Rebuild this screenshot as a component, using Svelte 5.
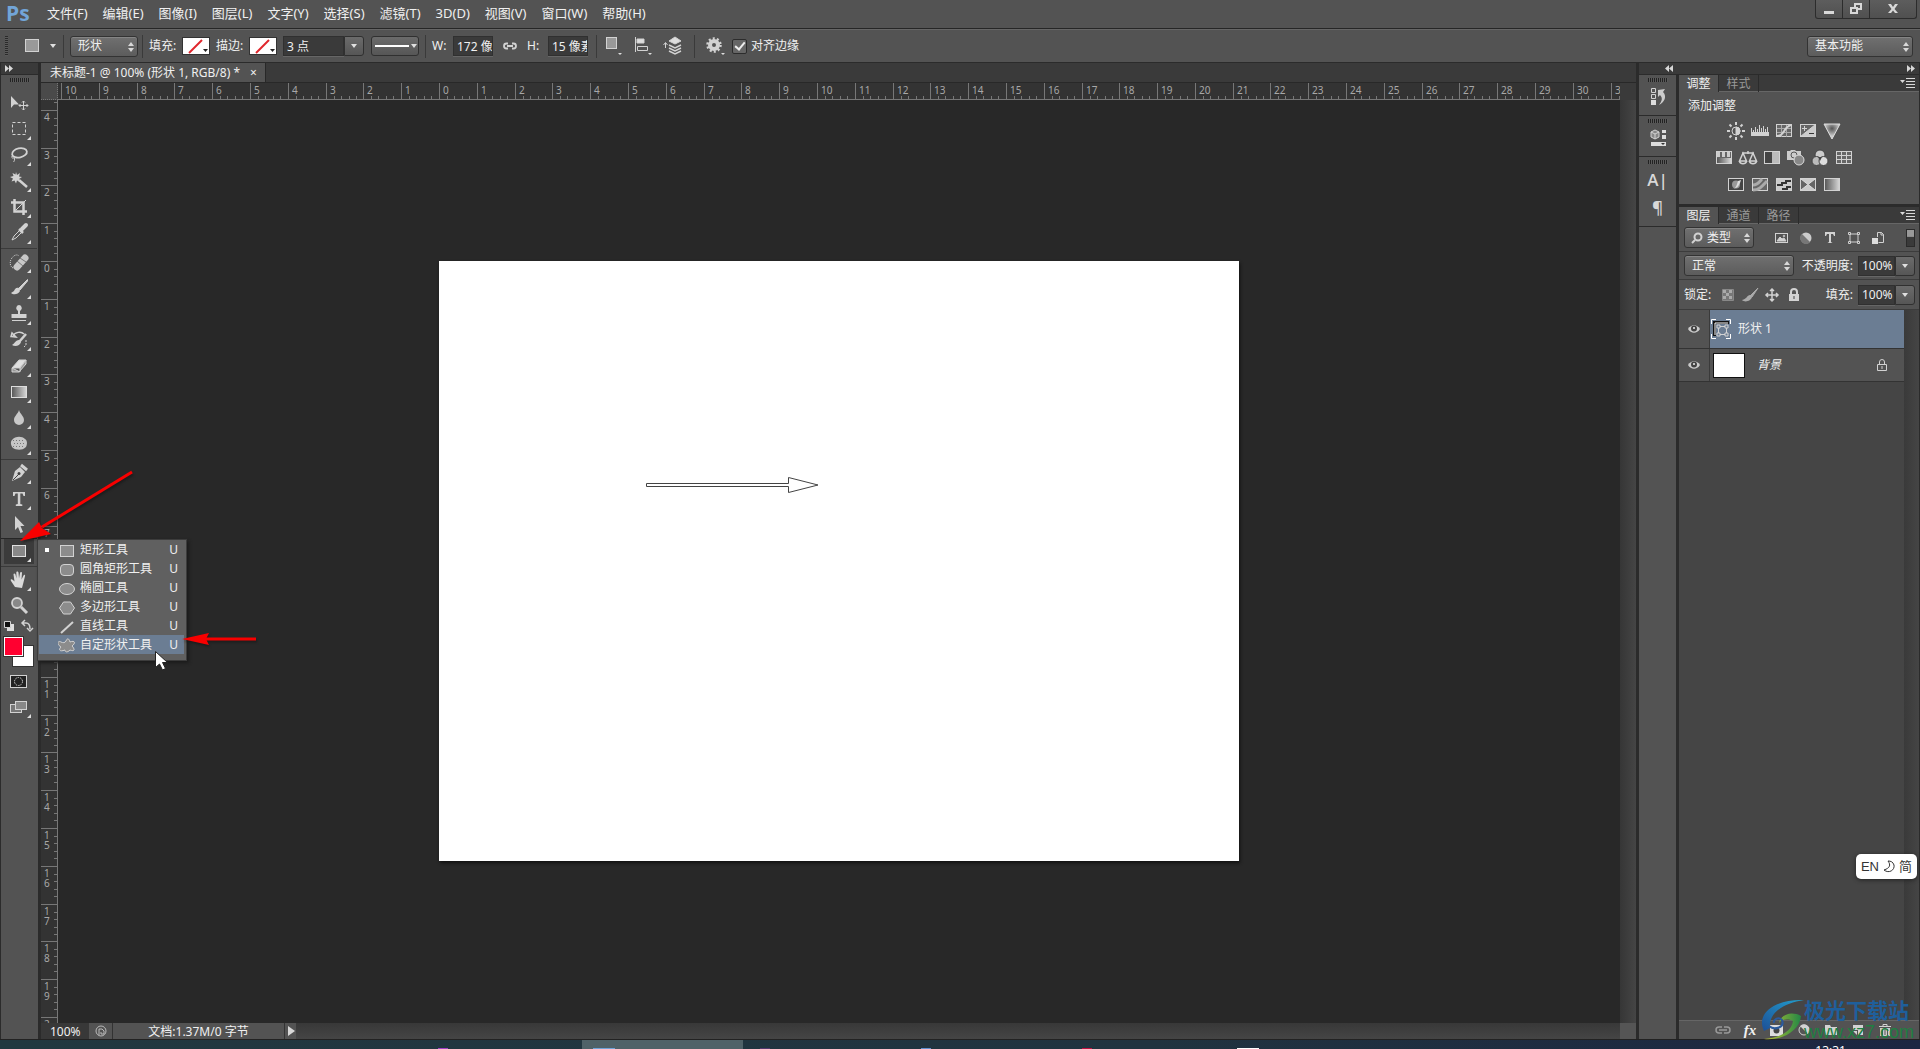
<script lang="ts">
	const menus = ["文件(F)", "编辑(E)", "图像(I)", "图层(L)", "文字(Y)", "选择(S)", "滤镜(T)", "3D(D)", "视图(V)", "窗口(W)", "帮助(H)"];

	// drawn on a 36 x 26 box, centred on 18,13
	const tools = [
		{ name: "移动工具", plain: true, art: `<path d="M10 6v12l3-3.500h5z" fill="#d2d2d2" stroke="none"/><path d="M18 15.500h9M22.500 11v9M21 12.500l1.500-1.500 1.500 1.500M21 18.500l1.500 1.500 1.500-1.500M19.500 14l-1.500 1.500 1.500 1.500M25.500 14l1.500 1.500-1.500 1.500"/>` },
		{ name: "矩形选框工具", art: `<rect x="11.500" y="6.500" width="13" height="12" stroke-dasharray="3 2"/>` },
		{ name: "套索工具", art: `<ellipse cx="18.500" cy="11" rx="7.500" ry="4.500" transform="rotate(-12 18 11)" stroke-width="1.800"/><path d="M12 13.500c-2 1-1.500 3 .5 2.500s1 3 0 4" />` },
		{ name: "魔棒工具", art: `<path d="M15 4l1 3 3-2-1 3.500 3 .5-3 2 1 3-3-1.500-1 3-1.500-3-3 1 1.500-3-3-1.500 3.500-1-1-3 3 1.500z" fill="#d2d2d2" stroke="none"/><path d="M18 12l8 7" stroke-width="2.500"/>` },
		{ name: "裁剪工具", art: `<path d="M13.500 5v12.500H26M10 8.500h12.500V21" stroke-width="2.500"/><path d="M15 16L25 6"/>` },
		{ name: "吸管工具", art: `<path d="M11 20l2-4 6-6 2 2-6 6z" fill="#555"/><path d="M18 9l4 4" stroke-width="2.500"/><path d="M21 9l4-4" stroke-width="4" stroke-linecap="round"/>`, last: true },
		{ name: "污点修复画笔工具", art: `<path d="M16 18l8-9" stroke-width="7" stroke-linecap="round" stroke="#c8c8c8"/><path d="M16 12l6 5M19 9l6 4" stroke="#777"/><path d="M12 19c-4-2-3-8-1-10 2-3 5-4 7-2" stroke-dasharray="1 1"/>` },
		{ name: "画笔工具", art: `<path d="M26.500 4.500l-9 9 1.500 1.500 7.500-9z" fill="#d2d2d2"/><path d="M18 13c-3-1-4 1-5 3l-3 2c2 2 7 2 9-2z" fill="#d2d2d2" stroke="none"/>` },
		{ name: "仿制图章工具", art: `<path d="M18 4a3 3 0 0 0-2 5l1 1v3h-6.500v4h15v-4H19v-3l1-1a3 3 0 0 0-2-5z" fill="#d2d2d2" stroke="none"/><path d="M11 19.500h14"/>` },
		{ name: "历史记录画笔工具", art: `<path d="M12 9c2-4 8-5 11-2M10 9.500l5 .5-4-4z" stroke-width="1.500"/><path d="M25 7l-7 8" stroke-width="2.500"/><path d="M18 13c-3 0-4 3-7 5 3 2 8 1 9-3z" fill="#d2d2d2" stroke="none"/><path d="M25 13v5l-2 2" stroke-dasharray="2 1"/>` },
		{ name: "橡皮擦工具", art: `<path d="M11 15l7-8h7l-6 8z" fill="#e0e0e0"/><path d="M11 15v4h7l7-8V7l-6 8v4z" fill="#999"/>` },
		{ name: "渐变工具", art: `<rect x="10.500" y="7.500" width="15" height="11" fill="url(#fade)" stroke="#ddd"/>` },
		{ name: "模糊工具", art: `<path d="M18 5c1 4 5 6 5 10a5 5 0 0 1-10 0c0-4 4-6 5-10z" fill="#c8c8c8" stroke="none"/>` },
		{ name: "海绵工具", art: `<path d="M11 9c3-4 10-4 13-1 3 2 2 6 1 8-4 4-10 3-13 1-2-2-3-6-1-8z" fill="#c6c6c6" stroke="none"/><path d="M12 9.500h12M13 12.500h12M12 15.500h12" stroke="#777" stroke-dasharray="1 2"/>`, last: true },
		{ name: "钢笔工具", art: `<path d="M19 7l5 5-4 5-9 4 3-10z" fill="#d2d2d2" stroke="none"/><path d="M20 5l6 5" stroke-width="3"/><path d="M12 20l6-6" stroke="#444"/><circle cx="18" cy="13.500" r="1.500" fill="#444" stroke="none"/>` },
		{ name: "横排文字工具", art: `<path d="M12 6h12v4h-1.500l-1-2.500h-2.200V18l2 .5V20h-6.500v-1.500l2-.5V7.500h-2.300l-1 2.500H12z" fill="#d2d2d2" stroke="none"/>` },
		{ name: "路径选择工具", plain: true, art: `<path d="M14 4v14l3-3 2.500 6 2.500-1-2.500-6h4z" fill="#d2d2d2" stroke="none"/>` },
		{ name: "矩形工具", art: `<rect x="11.500" y="7.500" width="13" height="11" fill="#888" stroke="#e0e0e0"/>`, active: true, last: true },
		{ name: "抓手工具", art: `<path d="M14 20l-4-6c-1-2 .5-2.500 2-1l1.500 1.500-1-7c0-1.500 1.500-1.500 2 0l1 4-.2-6c0-1.500 2-1.500 2.200 0l.5 6 1-5.500c.3-1.500 2-1.200 2 0l-.5 6.500 2-4c.8-1.300 2-.5 1.500.7l-2 8-1 3.800z" fill="#dadada" stroke="none"/>` },
		{ name: "缩放工具", plain: true, art: `<circle cx="16" cy="10" r="5" fill="#888" stroke-width="1.800"/><path d="M20 14l6 6" stroke-width="3"/>` },
	];

	const shapeTools = [
		{ name: "矩形工具", art: `<rect x="2.500" y="4.500" width="13" height="11"/>`, on: true },
		{ name: "圆角矩形工具", art: `<rect x="2.500" y="4.500" width="13" height="11" rx="3.500"/>` },
		{ name: "椭圆工具", art: `<ellipse cx="9" cy="10" rx="7.500" ry="5.500"/>` },
		{ name: "多边形工具", art: `<path d="M1.500 10l4-6h7l4 6-4 6h-7z"/>` },
		{ name: "直线工具", art: `<path d="M3 16L15 5" stroke-width="2"/>` },
		{ name: "自定形状工具", art: `<path d="M8 5c1-3 3-3 4 1 5-2 6 1 2 4 3 3 3 6-2 4-3 3-5 2-5 0-5 2-7 0-4-3-5-3-3-7 0-5 2 1 4 1 5-1z"/>`, hover: true },
	];

	const box = `<rect x="2.500" y="3.500" width="15" height="12" fill="#666"/>`;
	const adjustments = [
		[
			`<circle cx="10" cy="10" r="4"/><path d="M10 6a4 4 0 0 1 0 8z" fill="#d2d2d2"/><path d="M10 1v3M10 16v3M1 10h3M16 10h3M3.500 3.500l2 2M14.500 14.500l2 2M3.500 16.500l2-2M14.500 5.500l2-2" stroke-width="2"/>`,
			`<path d="M1 15v-4h18v4z" fill="#d2d2d2" stroke="none"/><path d="M1.500 7v5M3.500 9v3M5.500 6v6M7.500 8v4M9.500 4v8M11.500 7v5M13.500 5v7M15.500 8v4M17.500 6v6"/>`,
			`${box}<path d="M3 7.500h14M3 11.500h14M7.500 4v12M12.500 4v12" stroke="#aaa"/><path d="M3 15c8 0 6-9 14-11" stroke-width="2"/>`,
			`${box}<path d="M17.500 3.500v12h-15z" fill="#ccc"/><path d="M4 7.500h5M6.500 5v5"/><path d="M11 12.500h5" stroke="#333"/>`,
			`<path d="M2 3h16L10 18z" fill="url(#prism)" stroke="#ddd"/>`,
		],
		[
			`${box}<path d="M3 4h3v5H3zM8 4h3v5H8zM13 4h3v5h-3z" fill="#ccc" stroke="none"/><path d="M3 10h14v5H3z" fill="url(#fade)" stroke="none"/>`,
			`<path d="M4 5h12M10 3v3M5 5l-3.500 8h7zM15 5l-3.500 8h7zM1.500 13.500c1 3 6 3 7 0M11.500 13.500c1 3 6 3 7 0" stroke-width="1.500"/>`,
			`<rect x="2.500" y="3.500" width="15" height="12" fill="#bbb"/><path d="M3 4h7v11H3z" fill="#444" stroke="none"/>`,
			`<path d="M1 3h3l1-1h4l1 1h5v9H1z" fill="#ccc" stroke="none"/><circle cx="8" cy="7" r="3" stroke="#555"/><circle cx="13" cy="12" r="5" fill="#888" stroke="#ddd"/>`,
			`<circle cx="10" cy="7" r="5" fill="#ccc" stroke="#444"/><circle cx="6.500" cy="13" r="4.500" fill="#bbb" stroke="#444"/><circle cx="13.500" cy="13" r="4.500" fill="#ddd" stroke="#444"/><path d="M8 9h4l-2 4z" fill="#444" stroke="none"/>`,
			`${box}<path d="M3 7.500h14M3 11.500h14M7.500 4v12M12.500 4v12"/>`,
		],
		[
			`<rect x="2.500" y="3.500" width="15" height="12" fill="#444"/><circle cx="10" cy="9.500" r="4" fill="#999" stroke="none"/><path d="M5 14c4 0 5-1 7-8l3-1c-2 7-5 9-10 9z" fill="#ddd" stroke="none"/>`,
			`${box}<path d="M3 10c5 0 7-4 9-6M3 15c7 0 10-5 14-9" stroke-width="3" stroke="#aaa"/>`,
			`<rect x="2.500" y="3.500" width="15" height="12" fill="#ccc"/><path d="M3 9h4V7h4V5h6v2h-4v2H9v2H3zM8 15v-2h4v-2h5v2h-3v2z" fill="#333" stroke="none"/>`,
			`${box}<path d="M3 4l7 5.500L17 4M3 15l7-5.500 7 5.500" fill="#ccc" stroke="#ddd"/>`,
			`<rect x="2.500" y="3.500" width="15" height="12" fill="url(#fade)"/>`,
		],
	];

	const filters = [
		`<rect x="2.500" y="4.500" width="12" height="9"/><path d="M4 12l3-4 2 2 2-1 2 3z" fill="#d2d2d2"/><circle cx="11" cy="7" r=".8"/>`,
		`<circle cx="9" cy="9" r="5.500" fill="#ccc" stroke="none"/><path d="M5 13a5 5 0 0 1 0-8l8 8a5 5 0 0 1-8 0z" fill="#777" stroke="none"/>`,
		`<path d="M4 3h10v4h-1l-1-2h-2v8l1.500 1H6.500L8 13V5H6L5 7H4z" fill="#d2d2d2" stroke="none"/>`,
		`<path d="M5 5h8v8H5z"/><path d="M3.500 3.500h2v2h-2zM12.500 3.500h2v2h-2zM3.500 12.500h2v2h-2zM12.500 12.500h2v2h-2z"/>`,
		`<path d="M8.500 8V3.500h4l2 2v8h-5"/><path d="M12 3v3h3"/><path d="M3 9h6v6H3z" fill="#ddd" stroke="none"/>`,
	];

	const locks = [
		`<path d="M3.500 3.500h11v11h-11z" fill="#777" stroke="#888"/><path d="M4 4h3v3H4zM10 4h3v3h-3zM7 7h3v3H7zM4 10h3v3H4zM10 10h3v3h-3z" fill="#aaa" stroke="none"/>`,
		`<path d="M17 2l-8 8 2 1z" fill="#aaa" stroke="#aaa"/><path d="M9 9c-3 0-3 4-8 5 3 3 9 1 10-3z" fill="#aaa" stroke="none"/>`,
		`<path d="M9 2.500v13M2.500 9h13M7 5l2-2 2 2M7 13l2 2 2-2M5 7L3 9l2 2M13 7l2 2-2 2" stroke-width="1.500"/>`,
		`<path d="M4 8h10v7H4z" fill="#d2d2d2" stroke="none"/><path d="M6 9V6a3 3 0 0 1 6 0v3" stroke-width="2"/><path d="M9 10v3" stroke="#444"/>`,
	];

	const footer = [
		{ name: "链接图层", art: `<path d="M8 6H5a3 3 0 0 0 0 6h3M10 6h3a3 3 0 0 1 0 6h-3M5 9h8" stroke="#999" stroke-width="1.500"/>` },
		{ name: "添加图层样式", text: "fx" },
		{ name: "添加图层蒙版", art: `<path d="M2 4h13v11H2z" fill="#ddd" stroke="none"/><circle cx="8.500" cy="9.500" r="3" fill="#444" stroke="none"/>` },
		{ name: "创建调整图层", art: `<circle cx="9" cy="9" r="5" fill="#555"/><path d="M5 5l8 8a5.500 5.500 0 1 1-8-8z" transform="rotate(180 9 9)" fill="#d2d2d2" stroke="none"/>` },
		{ name: "创建新组", art: `<path d="M3 4h5l1 2h6v8H3z" fill="#d2d2d2" stroke="none"/>` },
		{ name: "创建新图层", art: `<path d="M4 4h10v10H9V9H4z" fill="#d2d2d2" stroke="none"/><path d="M4 10h4v4z" fill="#d2d2d2" stroke="none"/>` },
		{ name: "删除图层", art: `<path d="M4 7h10v8H4z" fill="#ccc" stroke="none"/><path d="M3 5.500h12M7 5V3.500h4V5"/><path d="M6.500 8v6M9 8v6M11.500 8v6" stroke="#555"/>` },
	];

	const tasks = ["#a03fc4", "#6fa3d8", "#51386b", "#5f8fd0", "#c01040", "#ffffff"];

	// 1cm at 96 dpi, with the origin on the document corner
	const CM = 37.795;
	const across = Array.from({ length: 42 }, (_, i) => i - 10).map((n) => ({ n, at: Math.round(381 + n * CM) }));
	const down = Array.from({ length: 26 }, (_, i) => i - 5).map((n) => ({ n, at: Math.round(161 + n * CM) }));
	const fifths = [1, 2, 3, 4].map((k) => Math.round((k * CM) / 5));

	let snap = $state(true);
	let wide = $state("172 像素");
	let tall = $state("15 像素");
</script>

{#snippet icon(art: string, w = 18, h = 18)}
	<svg class="icon" width={w} height={h} viewBox="0 0 {w} {h}" aria-hidden="true">{@html art}</svg>
{/snippet}

{#snippet updown()}
	<svg class="updown" width="6" height="12" aria-hidden="true"><path d="M0 5l3-4 3 4zM0 7l3 4 3-4z" /></svg>
{/snippet}

{#snippet menuMark()}
	<svg class="menu-mark" width="15" height="10" aria-hidden="true"><path d="M0 2h5L2.500 5zM6 0h9v1H6zM6 3h9v1H6zM6 6h9v1H6zM6 9h9v1H6z" /></svg>
{/snippet}

<svg class="defs" width="0" height="0" aria-hidden="true">
	<linearGradient id="fade"><stop offset="0" stop-color="#555" /><stop offset="1" stop-color="#d8d8d8" /></linearGradient>
	<radialGradient id="prism" cy=".3"><stop offset="0" stop-color="#555" /><stop offset="1" stop-color="#ccc" /></radialGradient>
	<linearGradient id="blue" x1="0" y1="1" x2="1" y2="0"><stop offset="0" stop-color="#1c4f96" /><stop offset="1" stop-color="#23a0cf" /></linearGradient>
	<linearGradient id="green"><stop offset="0" stop-color="#c5c82e" /><stop offset="1" stop-color="#238746" /></linearGradient>
</svg>

<div class="app">
	<header class="menubar">
		<span class="logo">Ps</span>
		<nav>
			{#each menus as m}<button>{m}</button>{/each}
		</nav>
		<div class="window-buttons">
			<button aria-label="最小化"><svg width="12" height="12"><path d="M1 8h10v3H1z" /></svg></button>
			<button aria-label="还原"><svg width="14" height="12"><path d="M5 0h8v7H9v4H1V4h4zM7 2v2h2v1h2V2zM3 6v3h4V6z" fill-rule="evenodd" /></svg></button>
			<button class="close" aria-label="关闭"><svg width="12" height="10"><path d="M1 0h3l2 3 2-3h3L7.500 5 11 9H8L6 6.500 4 9H1l3.500-4z" /></svg></button>
		</div>
	</header>

	<div class="options">
		<span class="grip-side"></span>
		<button class="preset" aria-label="工具预设">
			{@render icon(`<rect x=".5" y="2.500" width="13" height="12" fill="#999"/>`)}
			<i class="caret"></i>
		</button>
		<span class="sep"></span>
		<label class="pick mode">
			<select aria-label="模式"><option>形状</option></select>
			{@render updown()}
		</label>
		<span class="sep"></span>
		<span class="tag">填充:</span>
		<button class="paint" aria-label="填充">{@render icon(`<path d="M6 15L19 2" stroke="#e0262c" stroke-width="2"/><path d="M20 11h5l-2.500 3z" fill="#222" stroke="none"/>`, 26, 16)}</button>
		<span class="tag">描边:</span>
		<button class="paint" aria-label="描边">{@render icon(`<path d="M6 15L19 2" stroke="#e0262c" stroke-width="2"/><path d="M20 11h5l-2.500 3z" fill="#222" stroke="none"/>`, 26, 16)}</button>
		<input class="field stroke" aria-label="描边宽度" value="3 点" />
		<button class="drop" aria-label="描边宽度列表"><i class="caret"></i></button>
		<button class="line-style" aria-label="描边类型"><span></span><i class="caret"></i></button>
		<span class="sep"></span>
		<label class="size">W:<input class="field" bind:value={wide} /></label>
		<button class="link" aria-label="链接">{@render icon(`<path d="M6 6.500H4.500a2.500 2.500 0 0 0 0 5H6M10 6.500h1.500a2.500 2.500 0 0 1 0 5H10M5 9h6" stroke-width="1.800"/>`, 16, 18)}</button>
		<label class="size">H:<input class="field" bind:value={tall} /></label>
		<span class="sep"></span>
		<button class="op" aria-label="路径操作">{@render icon(`<rect x="1.500" y="1.500" width="10" height="11" fill="#999"/><path d="M13 17h4l-2 2z" fill="#ddd" stroke="none"/>`, 18, 20)}</button>
		<button class="op" aria-label="路径对齐">{@render icon(`<path d="M1.500 1v15"/><path d="M3 3h7v4H3z" fill="#ddd"/><path d="M3.500 10.500h10v4h-10z"/><path d="M14 17h4l-2 2z" fill="#ddd" stroke="none"/>`, 18, 20)}</button>
		<button class="op" aria-label="路径排列">{@render icon(`<path d="M2.500 12V7M.5 9l2-2.500 2 2.500"/><path d="M6 5l6-4 6 4-6 3z" fill="#ddd"/><path d="M6 9l6 3 6-3M6 12l6 3 6-3M6 15l6 3 6-3" stroke-width="1.500"/>`, 20, 20)}</button>
		<span class="sep"></span>
		<button class="op gear" aria-label="几何选项">{@render icon(`<circle cx="8" cy="9" r="4" stroke-width="4"/><circle cx="8" cy="9" r="6.500" stroke-width="2.500" stroke-dasharray="2 2.084"/><path d="M15 17h4l-2 2z" fill="#ddd" stroke="none"/>`, 20, 20)}</button>
		<label class="snap"><input type="checkbox" bind:checked={snap} />对齐边缘</label>
		<label class="pick workspace">
			<select aria-label="工作区"><option>基本功能</option></select>
			{@render updown()}
		</label>
	</div>

	<div class="main">
		<aside class="tools">
			<div class="strip"><svg width="8" height="7"><path d="M0 0l4 3.500L0 7zM4 0l4 3.500L4 7z" /></svg></div>
			<span class="grip"></span>
			{#each tools as t}
				<button class="tool" class:active={t.active} class:last={t.last} aria-label={t.name}>
					{@render icon(t.art + (t.plain ? "" : `<path d="M30 20v4h-4z" fill="#ddd" stroke="none"/>`), 36, 26)}
				</button>
			{/each}
			<div class="swap">
				{@render icon(`<path d="M6 5h7v7H6z" fill="#ddd" stroke="none"/><path d="M3.500 2.500h6v6h-6z" fill="#111"/>`, 14, 14)}
				{@render icon(`<path d="M2 4h4c3 0 4 2 4 6M5 1L2 4l3 3M7 9l3 3 3-3" stroke-width="1.500"/>`, 14, 14)}
			</div>
			<div class="colors"><button class="front" aria-label="前景色"></button><button class="back" aria-label="背景色"></button></div>
			<button class="tool" aria-label="快速蒙版">{@render icon(`<rect x="9.500" y="6.500" width="16" height="12" fill="#222"/><circle cx="17.500" cy="12.500" r="4" stroke-dasharray="1.500 1"/>`, 36, 26)}</button>
			<button class="tool" aria-label="屏幕模式">{@render icon(`<rect x="9.500" y="9.500" width="11" height="8" fill="#777"/><rect x="14.500" y="6.500" width="11" height="8" fill="#888"/><path d="M30 19v4h-4z" fill="#ddd" stroke="none"/>`, 36, 26)}</button>
		</aside>

		<section class="document">
			<div class="tabs">
				<div class="tab">未标题-1 @ 100% (形状 1, RGB/8) *<button aria-label="关闭文档">×</button></div>
			</div>
			<div class="view">
				<div class="corner"></div>
				<svg class="ruler" width="100%" height="17">
					<path class="edge" d="M0 16.500H4000" />
					{#each across as t}
						<path d="M{t.at}.5 0V17" />
						<text x={t.at + 4} y="11">{Math.abs(t.n)}</text>
						{#each fifths as f}<path d="M{t.at + f}.5 13V17" />{/each}
					{/each}
				</svg>
				<div class="gap"></div>
				<svg class="ruler" width="17" height="100%">
					<path class="edge" d="M16.500 0V4000" />
					{#each down as t}
						<path d="M0 {t.at}.5H17" />
						{#if t.at > 0}
							{#each String(Math.abs(t.n)) as digit, i}<text x="3" y={t.at + 11 + i * 10}>{digit}</text>{/each}
						{/if}
						{#each fifths as f}<path d="M13 {t.at + f}.5H17" />{/each}
					{/each}
				</svg>
				<div class="canvas">
					<div class="page">
						<svg width="180" height="24"><path d="M.5 9.500H142.500V3.500L172 11 142.500 18.500V12.500H.5z" /></svg>
					</div>
				</div>
				<div class="vscroll"></div>
			</div>
			<footer class="status">
				<input aria-label="缩放" value="100%" />
				<span class="badge">{@render icon(`<circle cx="7" cy="7" r="5" stroke="#bbb"/><path d="M5 11V5h3l2 2v3H7V8" stroke="#bbb"/>`, 14, 14)}</span>
				<span class="info">文档:1.37M/0 字节</span>
				<button aria-label="状态选项"><svg width="7" height="10"><path d="M0 0l7 5-7 5z" /></svg></button>
				<span class="hscroll"></span>
				<span class="end"></span>
			</footer>
		</section>

		<div class="docks">
			<div class="strip dock-strip">
				<svg class="fold" width="8" height="7"><path d="M4 0L0 3.500 4 7zM8 0L4 3.500 8 7z" /></svg>
				<svg width="8" height="7"><path d="M0 0l4 3.500L0 7zM4 0l4 3.500L4 7z" /></svg>
			</div>
			<div class="dock-body">
				<aside class="iconbar">
					<div class="group"><span class="grip"></span>
						<button aria-label="历史记录">{@render icon(`<path d="M2.500 1.500h4v4h-4zM2.500 7.500h4v4h-4z"/><path d="M2 13h5v5H2z" fill="#ddd" stroke="none"/><path d="M9 3l7-1-2 3c4 4 2 10-4 13 3-4 4-7 1-10l-2 2z" fill="#ccc" stroke="none"/>`, 18, 20)}</button>
					</div>
					<div class="group"><span class="grip"></span>
						<button aria-label="属性">{@render icon(`<path d="M6 2l4 2v5l-4 2-4-2V4z" fill="#888"/><path d="M2 4l4 2 4-2M6 6v5"/><path d="M13 2h4v3h-4zM13 7h4v4h-4zM2 14h15v4H2z" fill="#ddd" stroke="none"/><path d="M12 15h4l-2 2z" fill="#333" stroke="none"/>`, 18, 20)}</button>
					</div>
					<div class="group"><span class="grip"></span>
						<button class="glyph" aria-label="字符">A|</button>
						<button class="glyph" aria-label="段落">¶</button>
					</div>
				</aside>

				<div class="panels">
					<section class="panel">
						<div class="panel-tabs"><button class="on">调整</button><button>样式</button>{@render menuMark()}</div>
						<div class="adjust">
							<p>添加调整</p>
							{#each adjustments as row}
								<div class="row">
									{#each row as art}<button aria-label="调整图层">{@render icon(art, 20, 20)}</button>{/each}
								</div>
							{/each}
						</div>
					</section>

					<section class="panel layers">
						<div class="panel-tabs"><button class="on">图层</button><button>通道</button><button>路径</button>{@render menuMark()}</div>
						<div class="bar">
							<label class="pick kind">
								<svg class="icon glass" width="12" height="12"><circle cx="7" cy="5" r="3.500" stroke-width="2" /><path d="M4 8l-3 3" stroke-width="2" /></svg>
								<select aria-label="过滤"><option>类型</option></select>
								{@render updown()}
							</label>
							<div class="filters">
								{#each filters as art}<button aria-label="过滤图层">{@render icon(art)}</button>{/each}
							</div>
							<button class="toggle" aria-label="打开过滤"></button>
						</div>
						<div class="bar">
							<label class="pick blend">
								<select aria-label="混合模式"><option>正常</option></select>
								{@render updown()}
							</label>
							<label class="percent">不透明度:<input class="field" value="100%" /></label>
							<button class="drop" aria-label="不透明度滑块"><i class="caret"></i></button>
						</div>
						<div class="bar lock-bar">
							<span>锁定:</span>
							<div class="locks">
								{#each locks as art}<button aria-label="锁定">{@render icon(art)}</button>{/each}
							</div>
							<label class="percent">填充:<input class="field" value="100%" /></label>
							<button class="drop" aria-label="填充滑块"><i class="caret"></i></button>
						</div>
						<div class="list">
							<div class="items">
								{#each [{ name: "形状 1", shape: true }, { name: "背景", shape: false }] as layer}
									<div class="layer" class:selected={layer.shape}>
										<button class="eye" aria-label="可见性">{@render icon(`<path d="M0 5C3 0 9 0 12 5 9 10 3 10 0 5z" fill="#ccc" stroke="none"/><circle cx="6" cy="4.500" r="3" fill="#444" stroke="none"/><circle cx="6" cy="4" r="1" fill="#eee" stroke="none"/>`, 12, 10)}</button>
										<div class="body">
											{#if layer.shape}
												{@render icon(`<path d="M.5 5V.5H5M15 .5h4.500V5M.5 15v4.500H5M15 19.500h4.500V15" stroke="#fff"/><path d="M3.500 17V3.500H18" stroke="#111" stroke-width="3"/><path d="M4 16V4h13" stroke="#fff"/><path d="M7.500 7.500h8v8h-8z"/><path d="M6 6h3v3H6zM14 6h3v3h-3zM6 14h3v3H6zM14 14h3v3h-3z" fill="#6b7d93"/>`, 20, 20)}
												<span>{layer.name}</span>
											{:else}
												<i class="thumb"></i>
												<em>{layer.name}</em>
												{@render icon(`<path d="M1.500 6.500h9v6h-9zM3.500 6V4a2.500 2.500 0 0 1 5 0v2M6 8v3"/>`, 12, 14)}
											{/if}
										</div>
									</div>
								{/each}
							</div>
							<div class="track"></div>
						</div>
						<div class="footer">
							{#each footer as f}
								<button aria-label={f.name}>{#if f.text}<em>{f.text}</em>{:else}{@render icon(f.art)}{/if}</button>
							{/each}
						</div>
					</section>
				</div>
			</div>
		</div>
	</div>

	<div class="taskbar">
		{#each tasks as color, i}
			<span class="task" class:current={i === 1}><i style="background: {color}"></i></span>
		{/each}
		<time>13:31</time>
	</div>

	<div class="flyout" role="menu">
		{#each shapeTools as s}
			<button role="menuitem" class:hover={s.hover}>
				<i class:on={s.on}></i>
				{@render icon(s.art, 18, 18)}
				<span>{s.name}</span>
				<kbd>U</kbd>
			</button>
		{/each}
	</div>

	<svg class="marks" width="280" height="240" aria-hidden="true">
		<g class="red">
			<path d="M132 12L42 67" />
			<path class="tip" d="M20 81L39 62 42 68 51 74z" />
			<path d="M256 179H204" />
			<path class="tip" d="M182 179L209 173 206 179 209 185z" />
		</g>
		<path class="pointer" d="M155.500 191.500v16l4-3.500 3 6 3-1.500-3-6h5z" />
	</svg>

	<div class="ime"><span>EN</span><svg width="12" height="13"><path d="M5 1c3 4 2 7-4 9 5 4 11 0 10-5-1-3-3-4-6-4z" /></svg><span>简</span></div>

	<div class="watermark" aria-hidden="true">
		<svg width="44" height="42">
			<path d="M4 32C-4 16 12 0 44 1 24 4 8 14 10 29z" fill="url(#blue)" />
			<path d="M4 40c16-1 28-8 29-18-6-3-12-1-14 2 2-9 13-12 22-7-1 14-18 25-37 23z" fill="url(#green)" />
			<path d="M9 27c6 5 16 1 13-6-4-4-9 0-8 3" fill="none" stroke="#2b5a9c" stroke-width="2" />
		</svg>
		<div><strong>极光下载站</strong><span>www.xz7.com</span></div>
	</div>
</div>

<style>
	:global(body) {
		background: #282828;
		overflow: hidden;
	}

	.app {
		position: relative;
		display: grid;
		grid-template-rows: 29px 34px 1fr 9px;
		height: 100vh;
		overflow: hidden;
		color: #f0f0f0;
		font: 12px/16px "Noto Sans", "Noto Sans CJK SC", sans-serif;
		user-select: none;
	}

	button, input, select {
		font: inherit;
		color: inherit;
		margin: 0;
		padding: 0;
		border: 0;
		border-radius: 0;
		background: none;
		box-sizing: border-box;
	}

	svg {
		display: block;
		flex: none;
		fill: #d8d8d8;
	}

	.defs {
		position: absolute;
	}

	.icon {
		fill: none;
		stroke: #d2d2d2;
	}

	.menubar {
		display: flex;
		background: #535353;
		border-bottom: 1px solid #262626;
	}

	.logo {
		width: 40px;
		padding-left: 6px;
		box-sizing: border-box;
		font: bold 21px/26px "Open Sans", sans-serif;
		color: #72a5d8;
	}

	nav {
		display: flex;
	}

	nav button {
		padding: 0 8px 0 7px;
		font-size: 13px;
		line-height: 26px;
		height: 26px;
	}

	.window-buttons {
		display: flex;
		margin: 0 3px 0 auto;
		height: 19px;
		border: 1px solid #2c2c2c;
		border-top: 0;
		border-radius: 0 0 3px 3px;
		box-sizing: border-box;
		background: linear-gradient(#5d5d5d, #505050);
	}

	.window-buttons button {
		display: grid;
		place-items: center;
		width: 27px;
		border-right: 1px solid #2c2c2c;
	}

	.window-buttons .close {
		width: 46px;
		border: 0;
	}

	.options {
		display: flex;
		align-items: center;
		background: #535353;
		border-top: 1px solid #666;
		border-bottom: 1px solid #2b2b2b;
		box-sizing: border-box;
	}

	.grip-side {
		width: 3px;
		height: 20px;
		margin: 0 17px 0 5px;
		background: repeating-linear-gradient(#2a2a2a 0 1px, #5a5a5a 1px 2px);
	}

	.grip {
		flex: none;
		align-self: center;
		width: 20px;
		height: 4px;
		background: repeating-linear-gradient(90deg, #222 0 1px, #5a5a5a 1px 2px);
	}

	.preset {
		display: flex;
		align-items: center;
		gap: 7px;
		margin-right: 1px;
	}

	.caret {
		border: 3px solid transparent;
		border-top: 4px solid #e0e0e0;
		border-bottom: 0;
	}

	.sep {
		width: 1px;
		height: 23px;
		margin: 0 6px;
		background: #3a3a3a;
	}

	.pick {
		position: relative;
		display: flex;
		height: 21px;
	}

	.pick select {
		appearance: none;
		width: 100%;
		padding-left: 7px;
		border: 1px solid #333;
		border-radius: 3px;
		background: linear-gradient(#707070, #5c5c5c);
		box-shadow: inset 0 1px #858585;
	}

	.updown {
		position: absolute;
		right: 4px;
		top: 5px;
	}

	.mode {
		width: 68px;
		margin-right: -2px;
	}

	.tag {
		width: 33px;
	}

	.paint {
		width: 28px;
		height: 18px;
		border: 1px solid #333;
		background: #fff;
		margin-right: 6px;
	}

	.field {
		height: 20px;
		padding: 0 0 0 3px;
		border: 1px solid #303030;
		background: #3a3a3a;
		box-shadow: 0 1px #666;
	}

	.stroke {
		width: 61px;
	}

	.drop {
		display: grid;
		place-items: center;
		flex: none;
		width: 20px;
		height: 20px;
		border: 1px solid #303030;
		border-radius: 0 3px 3px 0;
		background: linear-gradient(#6b6b6b, #565656);
	}

	.line-style {
		display: flex;
		align-items: center;
		gap: 2px;
		width: 48px;
		height: 20px;
		margin-left: 7px;
		padding-left: 3px;
		border: 1px solid #303030;
		border-radius: 3px;
		background: linear-gradient(#6b6b6b, #565656);
	}

	.line-style span {
		width: 34px;
		height: 2px;
		background: #fff;
	}

	.size {
		display: flex;
		align-items: center;
		justify-content: space-between;
		width: 61px;
	}

	.size .field {
		width: 40px;
	}

	.link {
		margin: 0 9px;
	}

	.size ~ .sep {
		margin: 0 8px;
	}

	.op {
		margin-right: 11px;
	}

	.op + .sep {
		margin: 0 11px 0 0;
	}

	.gear {
		margin-right: 6px;
	}

	.snap {
		display: flex;
		align-items: center;
		gap: 4px;
	}

	.snap input {
		appearance: none;
		width: 15px;
		height: 15px;
		border: 1px solid #2c2c2c;
		border-radius: 2px;
		background: #666;
		display: grid;
		place-items: center;
	}

	.snap input:checked::before {
		content: "";
		width: 4px;
		height: 8px;
		margin-bottom: 3px;
		border: solid #eee;
		border-width: 0 2px 2px 0;
		transform: rotate(40deg);
	}

	.workspace {
		width: 106px;
		margin: 0 7px 0 auto;
	}

	.main {
		display: grid;
		grid-template-columns: 41px 1fr 281px;
		min-height: 0;
		border-bottom: 1px solid #222;
		background: #2b2b2b;
	}

	.strip {
		display: flex;
		align-items: center;
		align-self: stretch;
		flex: none;
		height: 11px;
		padding-left: 4px;
		border-bottom: 1px solid #2b2b2b;
		background: #3a3a3a;
	}

	.tools {
		display: flex;
		flex-direction: column;
		margin: 0 3px 0 1px;
		background: #535353;
	}

	.tools .grip {
		margin: 3px 0 8px;
	}

	.tool {
		width: 36px;
		height: 26px;
	}

	.last {
		height: 29px;
		border-bottom: 1px solid #3a3a3a;
		padding-bottom: 2px;
	}

	.active {
		background: #3b3b3b;
		box-shadow: inset 0 1px #262626, inset 0 -2px #535353, inset 3px 0 #535353, inset -3px 0 #535353;
	}

	.swap {
		display: flex;
		gap: 5px;
		height: 18px;
	}

	.colors {
		display: grid;
		grid-template: 9px 10px 12px / 9px 10px 10px;
		margin: 0 0 1px 3px;
	}

	.front {
		grid-area: 1 / 1 / 3 / 3;
		z-index: 1;
		border: 1px solid #fff;
		outline: 1px solid #333;
		background: #ff0030;
	}

	.back {
		grid-area: 2 / 2 / 4 / 4;
		margin-bottom: 2px;
		background: #fff;
		outline: 1px solid #333;
	}

	.document {
		display: grid;
		grid-template-rows: 20px 1fr 16px;
		min-width: 0;
		min-height: 0;
		margin-right: 3px;
	}

	.tabs {
		display: flex;
		background: #3a3a3a;
		border-bottom: 1px solid #282828;
	}

	.tab {
		height: 19px;
		padding: 0 8px 0 9px;
		border-right: 1px solid #282828;
		background: #535353;
		line-height: 20px;
	}

	.tab button {
		margin-left: 10px;
		line-height: 16px;
	}

	.view {
		display: grid;
		grid-template: 17px minmax(0, 1fr) / 17px minmax(0, 1fr) 16px;
		min-height: 0;
	}

	.corner {
		background: #4a4a4a;
		border: dotted #777;
		border-width: 0 1px 1px 0;
		box-sizing: border-box;
	}

	.gap {
		background: #3a3a3a;
	}

	.ruler {
		background: #333;
		stroke: #777;
	}

	.ruler text {
		fill: #a8a8a8;
		stroke: none;
		font-size: 10px;
	}

	.canvas {
		position: relative;
		background: #282828;
		overflow: hidden;
	}

	.page {
		position: absolute;
		left: 381px;
		top: 161px;
		width: 800px;
		height: 600px;
		background: #fff;
		box-shadow: 1px 2px 3px #111;
	}

	.page svg {
		position: absolute;
		left: 207px;
		top: 213px;
		fill: none;
		stroke: #444;
	}

	.vscroll {
		background: linear-gradient(90deg, #363636, #454545);
	}

	.status {
		display: flex;
		background: #383838;
	}

	.status > * {
		box-sizing: border-box;
		height: 16px;
		line-height: 17px;
	}

	.status input {
		width: 48px;
		padding-left: 9px;
	}

	.badge {
		width: 24px;
		padding: 1px 5px;
		border-right: 1px solid #333;
		background: #535353;
	}

	.info {
		width: 171px;
		text-align: center;
		background: #535353;
	}

	.status button {
		width: 12px;
		padding-left: 3px;
		border-left: 1px solid #333;
		background: #535353;
	}

	.hscroll {
		flex: 1;
		background: linear-gradient(#383838, #454545);
	}

	.end {
		width: 16px;
		background: #555;
	}

	.docks {
		display: flex;
		flex-direction: column;
		min-height: 0;
		padding-right: 1px;
	}

	.dock-strip {
		justify-content: space-between;
		padding: 0 4px 0 26px;
	}

	.dock-body {
		display: grid;
		grid-template-columns: 37px 1fr;
		gap: 3px;
		flex: 1;
		min-height: 0;
	}

	.iconbar {
		background: #535353;
	}

	.group {
		display: flex;
		flex-direction: column;
		align-items: center;
		gap: 5px;
		padding: 3px 0 8px;
		border-bottom: 1px solid #2b2b2b;
	}

	.group .glyph {
		height: 22px;
		font: 600 17px/22px "Open Sans", sans-serif;
		color: #d8d8d8;
	}

	.panels {
		display: flex;
		flex-direction: column;
		gap: 3px;
		min-height: 0;
	}

	.panel {
		background: #535353;
	}

	.panel-tabs {
		display: flex;
		align-items: center;
		height: 16px;
		border-bottom: 1px solid #666;
		background: #3a3a3a;
	}

	.panel-tabs button {
		width: 40px;
		height: 17px;
		line-height: 18px;
		border-right: 1px solid #2b2b2b;
		color: #999;
	}

	.panel-tabs .on {
		background: #535353;
		color: #f0f0f0;
		align-self: flex-start;
	}

	.menu-mark {
		margin: 0 4px 0 auto;
	}

	.adjust {
		height: 112px;
	}

	.adjust p {
		margin: 0;
		padding: 6px 0 4px 9px;
	}

	.row {
		display: flex;
		justify-content: center;
		gap: 4px;
		margin-right: 30px;
		padding: 3px 0 4px;
	}

	.layers {
		display: flex;
		flex-direction: column;
		flex: 1;
		min-height: 0;
	}

	.bar {
		display: flex;
		align-items: center;
		flex: none;
		height: 28px;
		padding: 0 4px 0 5px;
		box-sizing: border-box;
		border-bottom: 1px solid #3c3c3c;
	}

	.kind {
		width: 70px;
	}

	.kind select {
		padding-left: 22px;
	}

	.glass {
		position: absolute;
		left: 7px;
		top: 5px;
	}

	.filters {
		display: flex;
		gap: 6px;
		margin-left: 19px;
	}

	.toggle {
		width: 9px;
		height: 18px;
		margin-left: auto;
		border: 1px solid #2b2b2b;
		background: linear-gradient(#999 0 40%, #3a3a3a 45%);
	}

	.blend {
		width: 110px;
	}

	.percent {
		display: flex;
		align-items: center;
		gap: 5px;
		margin-left: auto;
	}

	.percent .field {
		width: 37px;
	}

	.locks {
		display: flex;
		gap: 4px;
		margin-left: 8px;
	}

	.lock-bar {
		height: 30px;
	}

	.list {
		display: flex;
		flex: 1;
		min-height: 0;
		background: #454545;
	}

	.items {
		flex: 1;
	}

	.track {
		width: 15px;
		background: linear-gradient(90deg, #3a3a3a, #454545);
	}

	.layer {
		display: flex;
		height: 32px;
		border-bottom: 1px solid #333;
		background: #535353;
	}

	.layer.selected {
		height: 38px;
	}

	.eye {
		width: 31px;
		padding: 0 9px;
		border-right: 1px solid #3a3a3a;
	}

	.body {
		display: flex;
		align-items: center;
		flex: 1;
		padding-left: 1px;
		gap: 7px;
	}

	.body > :last-child:not(span) {
		margin: 0 16px 0 auto;
	}

	.body em {
		margin-left: 5px;
	}

	.selected .body {
		background: #6b7d93;
	}

	.thumb {
		width: 30px;
		height: 23px;
		margin-left: 2px;
		border: 1px solid #111;
		background: #fff;
	}

	.footer {
		display: flex;
		align-items: center;
		justify-content: flex-end;
		gap: 9px;
		flex: none;
		height: 18px;
		padding-right: 25px;
		border-top: 1px solid #666;
	}

	.footer em {
		display: block;
		width: 18px;
		font: italic bold 15px/16px "Liberation Serif", serif;
	}

	.taskbar {
		display: flex;
		padding-left: 421px;
		overflow: hidden;
		background: linear-gradient(90deg, #21383f, #20333f 60%, #1c2642);
	}

	.task {
		width: 161px;
		height: 40px;
		padding: 8px 0 0 11px;
		box-sizing: border-box;
	}

	.task i {
		display: block;
		width: 22px;
		height: 22px;
	}

	.current {
		background: #4f6268;
	}

	.task:not(.current):not(:nth-child(6)) i {
		width: 10px;
		margin-left: 6px;
	}

	time {
		margin: 3px 74px 0 auto;
		color: #fff;
	}

	.flyout {
		position: absolute;
		left: 37px;
		top: 539px;
		width: 150px;
		padding: 0 2px 6px 1px;
		box-sizing: border-box;
		border: 1px solid #3c3c3c;
		background: #606060;
		box-shadow: 2px 2px 3px #1b1b1b;
	}

	.flyout button {
		display: flex;
		align-items: center;
		width: 100%;
		height: 19px;
		padding: 0 6px;
		line-height: 18px;
		text-align: left;
	}

	.flyout i {
		width: 4px;
		height: 4px;
		margin-right: 9px;
	}

	.flyout .on {
		background: #fff;
	}

	.flyout .icon {
		fill: #8c8c8c;
		margin-right: 4px;
	}

	.flyout span {
		flex: 1;
		white-space: nowrap;
	}

	.flyout kbd {
		font: inherit;
	}

	.flyout .hover {
		background: #6b7d93;
	}

	.marks {
		position: absolute;
		left: 0;
		top: 460px;
		pointer-events: none;
	}

	.red {
		fill: none;
		stroke: #f80000;
		stroke-width: 3px;
		filter: drop-shadow(1px 2px 1px #1118);
	}

	.tip {
		fill: #f80000;
		stroke: none;
	}

	.pointer {
		fill: #fff;
		stroke: #222;
	}

	.ime {
		position: absolute;
		right: 3px;
		bottom: 170px;
		display: flex;
		align-items: center;
		gap: 4px;
		height: 25px;
		padding: 0 5px;
		border-radius: 5px;
		background: #fff;
		color: #333;
		font: 13px/16px "Liberation Sans", "Noto Sans CJK SC", sans-serif;
		box-shadow: 0 1px 4px #222;
	}

	.ime svg {
		fill: none;
		stroke: #333;
	}

	.watermark {
		position: absolute;
		right: 10px;
		bottom: 8px;
		display: flex;
		pointer-events: none;
	}

	.watermark div {
		display: grid;
		width: 106px;
	}

	.watermark strong {
		font-size: 21px;
		line-height: 23px;
		color: #1f5f9c;
	}

	.watermark span {
		font: 18px/16px "Liberation Sans", sans-serif;
		color: #1f7f42;
	}
</style>
